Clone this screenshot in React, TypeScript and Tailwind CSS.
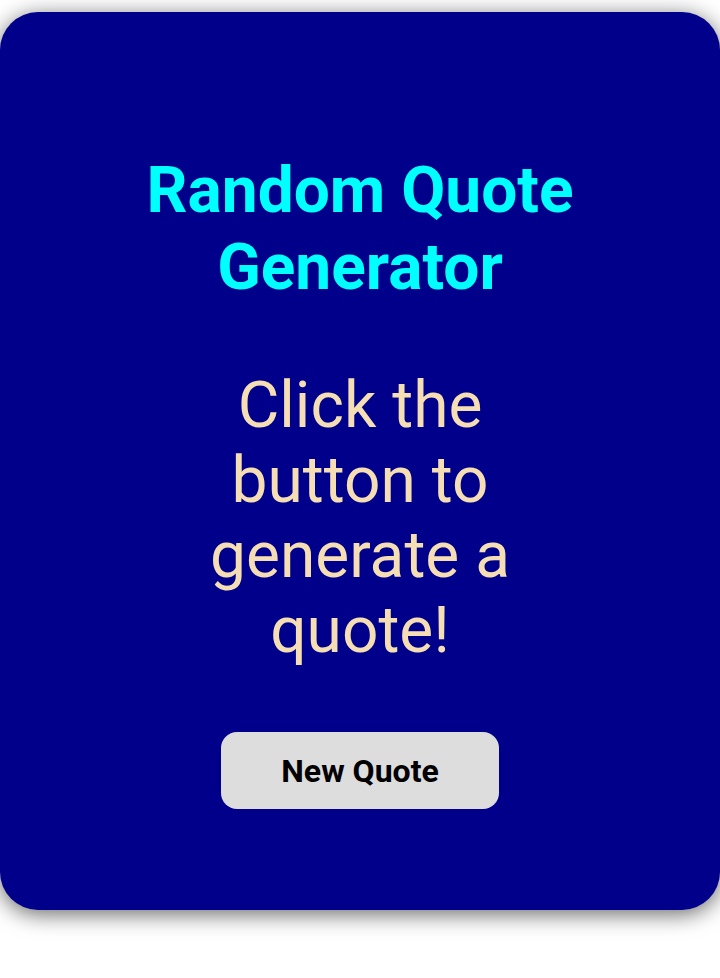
export default function App() {
  return (
    <div className="min-h-[978px] bg-white pt-[12px] font-['Roboto',sans-serif]">
      <div className="flex flex-col items-center rounded-[38px] bg-[#00008b] pt-[140px] pb-[101px] text-center shadow-[0_4px_22px_rgba(0,0,0,0.6)]">
        <h1 className="w-[460px] text-[64px] font-bold leading-[77px] text-[#00ffff]">
          Random Quote Generator
        </h1>
        <p className="mt-[62px] w-[320px] text-[64px] leading-[75px] text-[#f5deb3]">
          Click the button to generate a quote!
        </p>
        <button className="mt-[64px] h-[77px] w-[278px] rounded-[16px] bg-[#dddddd] text-[32px] font-bold text-black">
          New Quote
        </button>
      </div>
    </div>
  );
}
